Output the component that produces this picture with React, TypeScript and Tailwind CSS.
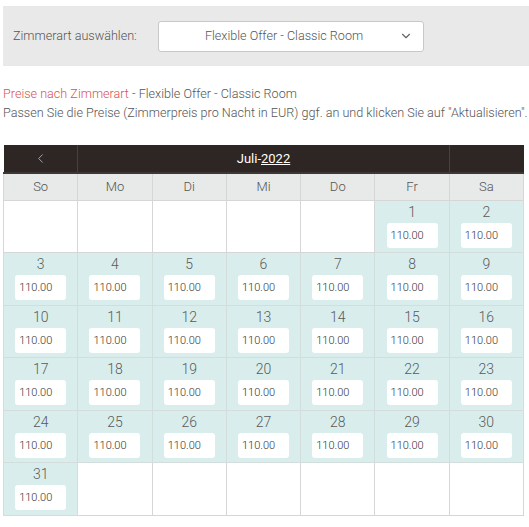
import { ChevronDown, ChevronLeft } from "lucide-react";

const days = ["So", "Mo", "Di", "Mi", "Do", "Fr", "Sa"];

// Juli 2022 starts on a Friday
const weeks: (number | null)[][] = [
  [null, null, null, null, null, 1, 2],
  [3, 4, 5, 6, 7, 8, 9],
  [10, 11, 12, 13, 14, 15, 16],
  [17, 18, 19, 20, 21, 22, 23],
  [24, 25, 26, 27, 28, 29, 30],
  [31, null, null, null, null, null, null],
];

function DayCell({ day }: { day: number | null }) {
  if (day === null) {
    return <td className="h-[52.5px] border border-[#d6d6d6] bg-white" />;
  }
  return (
    <td className="h-[52.5px] border border-[#d3dedc] bg-[#d9eeec] p-0 align-top">
      <div className="flex flex-col items-center">
        <span className="mt-[1px] h-[20px] text-[14px] leading-[20px] text-[#5a5a5a]">
          {day}
        </span>
        <input
          defaultValue="110.00"
          className="mt-[1px] h-[25px] w-[51px] rounded-[3px] bg-white pl-[4px] text-[11px] text-[#333] outline-none"
        />
      </div>
    </td>
  );
}

export default function App() {
  return (
    <div
      className="min-h-[527px] bg-white pl-[3px] font-light text-[#555]"
      style={{ fontFamily: "Roboto, 'Liberation Sans', sans-serif" }}
    >
      {/* Zimmerart Auswahl */}
      <div className="mt-[6px] flex h-[60px] items-center bg-[#e9e9e9]">
        <span className="ml-[10px] w-[145px] text-[12.6px]">Zimmerart auswählen:</span>
        <div className="relative flex h-[31px] w-[266px] items-center justify-center rounded-[3px] border border-[#c8c8c8] bg-white pr-[14px] text-[12.6px] text-[#555]">
          Flexible Offer - Classic Room
          <ChevronDown className="absolute right-[10px] h-[14px] w-[14px] text-[#666]" strokeWidth={2} />
        </div>
      </div>

      {/* Hinweise */}
      <div className="mt-[18px] text-[12.6px] leading-[19px]">
        <p>
          <span className="text-[#d9534f]">Preise nach Zimmerart</span> - Flexible Offer - Classic Room
        </p>
        <p className="whitespace-nowrap">
          Passen Sie die Preise (Zimmerpreis pro Nacht in EUR) ggf. an und klicken Sie auf "Aktualisieren".
        </p>
      </div>

      {/* Kalender */}
      <table className="mt-[23px] w-[521px] table-fixed border-collapse">
        <thead>
          <tr className="h-[28px] border-b-2 border-[#3d3836] bg-[#2d2624] text-white">
            <th className="border-r border-[#48423f] p-0 font-normal">
              <ChevronLeft className="mx-auto h-[15px] w-[15px] text-[#aaa]" strokeWidth={1.5} />
            </th>
            <th colSpan={5} className="border-r border-[#48423f] p-0 text-[13px] font-normal">
              Juli-<span className="underline">2022</span>
            </th>
            <th className="p-0" />
          </tr>
          <tr className="h-[27px] bg-[#e8e9e9]">
            {days.map((d) => (
              <th key={d} className="border border-[#d6d6d6] p-0 text-[13px] font-light text-[#555]">
                {d}
              </th>
            ))}
          </tr>
        </thead>
        <tbody>
          {weeks.map((week, i) => (
            <tr key={i}>
              {week.map((day, j) => (
                <DayCell key={j} day={day} />
              ))}
            </tr>
          ))}
        </tbody>
      </table>
    </div>
  );
}
